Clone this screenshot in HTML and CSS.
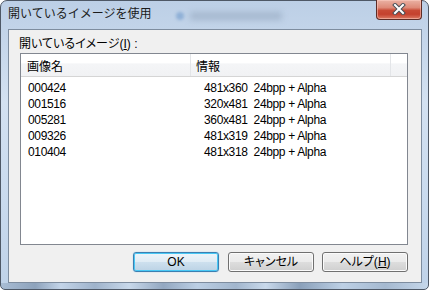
FILE: index.html
```html
<html>
    <head>
        <meta charset="utf-8" />
        <link rel="stylesheet" href="styles.css">
    </head>
    <body>
        <div class="window">
            <div class="titlebar">
                <span class="title">開いているイメージを使用</span>
                <span class="ghost"><i class="ghost-dot"></i><i class="ghost-text"></i></span>
                <div class="close">
                    <svg width="14" height="12" viewBox="0 0 14 12">
                        <path d="M3 2 L11 10 M11 2 L3 10" stroke="#4a4f57" stroke-width="4" stroke-linecap="square" fill="none"/>
                        <path d="M3 2 L11 10 M11 2 L3 10" stroke="#ffffff" stroke-width="2" stroke-linecap="square" fill="none"/>
                    </svg>
                </div>
            </div>

            <div class="client">
                <div class="caption">開いているイメージ(<u>I</u>) :</div>

                <div class="listview">
                    <div class="header">
                        <div class="hcol name">画像名</div>
                        <div class="hcol info">情報</div>
                        <div class="hcol rest"></div>
                    </div>
                    <div class="rows">
                        <div class="row"><span class="name">000424</span><span class="info">481x360  24bpp + Alpha</span></div>
                        <div class="row"><span class="name">001516</span><span class="info">320x481  24bpp + Alpha</span></div>
                        <div class="row"><span class="name">005281</span><span class="info">360x481  24bpp + Alpha</span></div>
                        <div class="row"><span class="name">009326</span><span class="info">481x319  24bpp + Alpha</span></div>
                        <div class="row"><span class="name">010404</span><span class="info">481x318  24bpp + Alpha</span></div>
                    </div>
                </div>

                <div class="buttons">
                    <div class="btn default">OK</div>
                    <div class="btn">キャンセル</div>
                    <div class="btn">ヘルプ(<u>H</u>)</div>
                </div>
            </div>
        </div>
    </body>
</html>
```

FILE: styles.css
```css
body {
    margin: 0;
    width: 429px;
    height: 290px;
    background-color: #ffffff;
    overflow: hidden;
}

.window {
    box-sizing: border-box;
    width: 429px;
    height: 290px;
    display: flex;
    flex-direction: column;
    border: solid 1px #4e5866;
    border-radius: 7px 7px 5px 5px;
    padding: 0px 6px 6px 7px;
    background:
        linear-gradient(90deg, #a9bdd4 0%, #8ea3bc 8%, #c3d4e8 14%, #9fb3cb 22%, #c8d8ea 30%, #93a8c1 38%, #bccfe4 46%, #a2b6cd 55%, #c9d9eb 62%, #8aa0ba 70%, #bdd0e5 80%, #a5b9d0 90%, #c6d7ea 100%) left bottom / 100% 6px no-repeat,
        linear-gradient(180deg, #bccfe6 0%, #d3e1f1 35%, #c9daee 70%, #bfd2e8 100%);
    font-family: "Liberation Sans", "Noto Sans CJK JP", sans-serif;
    font-size: 12px;
    color: #000000;
}

.titlebar {
    height: 28px;
    display: flex;
    align-items: flex-start;
}

.title {
    margin-top: 4px;
    line-height: 16px;
    font-family: "Noto Sans CJK JP", sans-serif;
    color: #1b1b1b;
}

.ghost {
    display: flex;
    align-items: center;
    margin: 9px 0px 0px 25px;
    height: 12px;
}

.ghost-dot {
    width: 8px;
    height: 8px;
    border-radius: 50%;
    background-color: #8fb0d6;
    filter: blur(1.5px);
}

.ghost-text {
    width: 92px;
    height: 8px;
    margin-left: 6px;
    background-color: #9cafc6;
    opacity: 0.75;
    filter: blur(3px);
}

.close {
    margin: -1px 0px 0px auto;
    box-sizing: border-box;
    width: 46px;
    height: 20px;
    display: flex;
    align-items: center;
    justify-content: center;
    border: solid 1px #5d2c26;
    border-top: none;
    border-radius: 0px 0px 4px 4px;
    background: linear-gradient(180deg, #eab2a4 0%, #de8a78 40%, #c84a35 55%, #c4412e 75%, #dc7a63 100%);
    box-shadow: inset 0px 0px 0px 1px rgba(255, 210, 200, 0.5);
}

.close svg {
    margin-top: -1px;
}

.client {
    flex: 1;
    display: flex;
    flex-direction: column;
    border: solid 1px #7e8d9f;
    background-color: #f0f0f0;
    padding: 6px 13px 10px 11px;
}

.caption {
    margin-left: -1px;
    line-height: 16px;
    font-feature-settings: "palt";
}

.listview {
    margin-top: 1px;
    height: 192px;
    box-sizing: border-box;
    border: solid 1px #828790;
    background-color: #ffffff;
}

.header {
    display: flex;
    height: 22px;
    border-bottom: solid 1px #d5d5d5;
    background: linear-gradient(180deg, #ffffff 0%, #ffffff 40%, #f4f5f7 45%, #f1f2f4 100%);
    font-family: "Noto Sans CJK JP", sans-serif;
}

.hcol {
    padding-top: 2px;
    line-height: 20px;
    box-sizing: border-box;
}

.hcol.name {
    width: 170px;
    padding-left: 6px;
    border-right: solid 1px #e3e5e8;
}

.hcol.info {
    width: 200px;
    padding-left: 5px;
    border-right: solid 1px #e3e5e8;
}

.hcol.rest {
    flex: 1;
}

.rows {
    padding-top: 3px;
}

.row {
    display: flex;
    height: 16px;
    line-height: 16px;
    letter-spacing: -0.35px;
}

.row .name {
    width: 170px;
    padding-left: 7px;
    box-sizing: border-box;
}

.row .info {
    padding-left: 13px;
    white-space: pre;
}

.buttons {
    margin-top: 7px;
    display: flex;
    justify-content: flex-end;
    gap: 8px;
}

.btn {
    box-sizing: border-box;
    width: 86px;
    height: 20px;
    line-height: 18px;
    text-align: center;
    border: solid 1px #707070;
    border-radius: 3px;
    background: linear-gradient(180deg, #f2f2f2 0%, #ebebeb 48%, #dddddd 52%, #cfcfcf 100%);
    box-shadow: inset 0px 0px 0px 1px #fbfbfb;
    font-feature-settings: "palt";
    cursor: default;
}

.btn.default {
    margin-right: 1px;
    border-color: #3c7fb1;
    background: linear-gradient(180deg, #eef5fa 0%, #e0ecf5 48%, #cde0ee 52%, #bcd3e5 100%);
    box-shadow: inset 0px 0px 0px 1px #48c8f5, 0px 0px 1px #62b7ec;
}
```
